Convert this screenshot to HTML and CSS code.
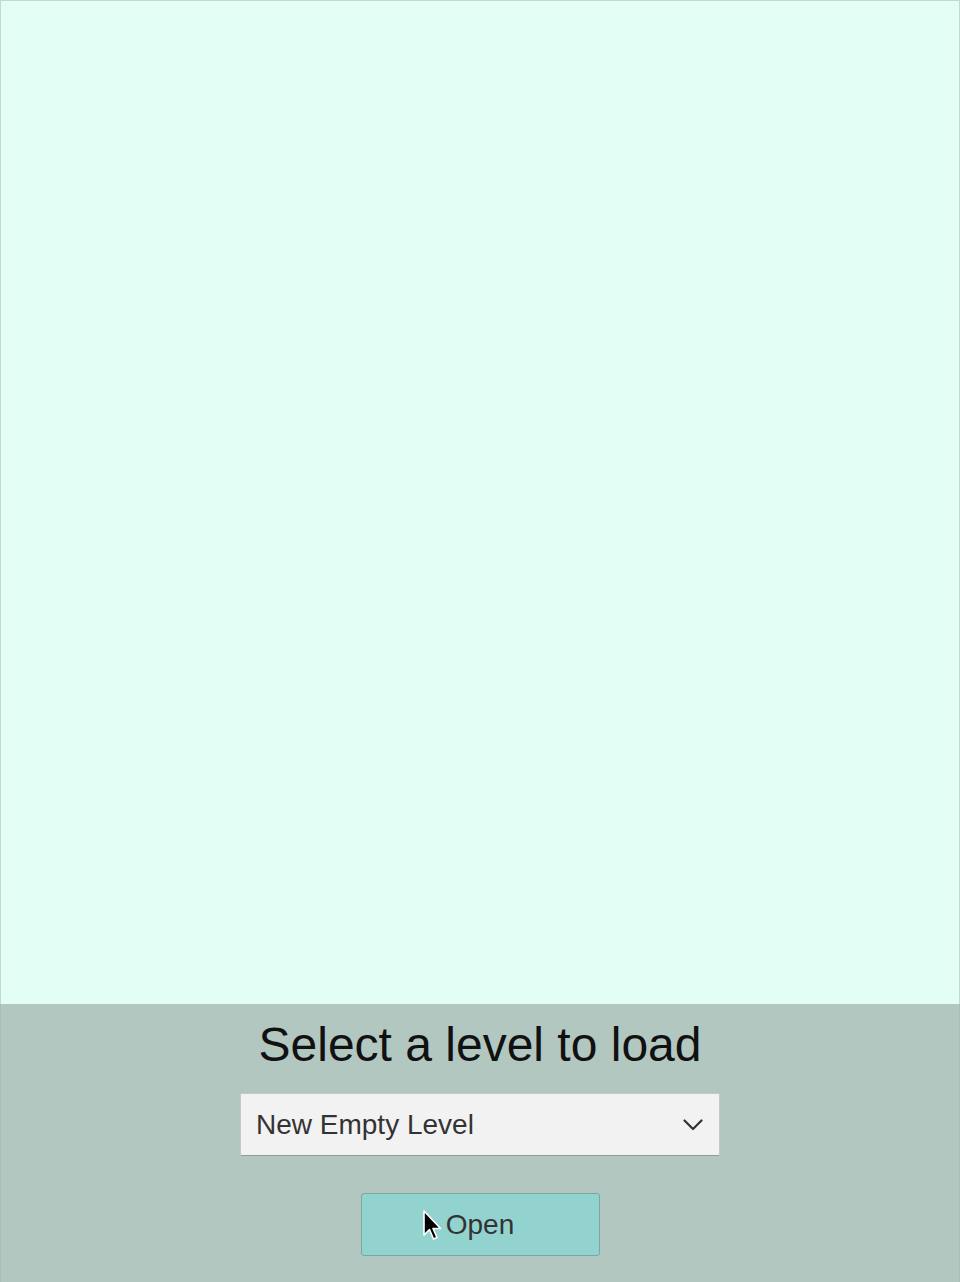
FILE: index.html
```html
<!DOCTYPE html>
<html lang="en">
<head>
<meta charset="utf-8">
<title>Level select</title>
<link rel="stylesheet" href="styles.css">
</head>
<body>
<div class="app">
  <div class="canvas"></div>
  <div class="panel">
    <h1 class="title">Select a level to load</h1>
    <div class="select">
      <span class="select-text">New Empty Level</span>
      <svg class="chevron" width="20" height="12" viewBox="0 0 20 12"><path d="M1.5 1.5 L10 10 L18.5 1.5" fill="none" stroke="#333" stroke-width="2.2" stroke-linecap="round" stroke-linejoin="round"/></svg>
    </div>
    <button class="open-btn">Open
      <svg class="cursor" width="22" height="32" viewBox="0 0 22 32"><path d="M2 1 L2 25 L7.5 19.5 L11.5 29 L15 27.5 L11 18.5 L18.5 18.5 Z" fill="#000" stroke="#fff" stroke-width="1.6" stroke-linejoin="round"/></svg>
    </button>
  </div>
</div>
</body>
</html>
```

FILE: styles.css
```css
html, body {
  margin: 0;
  padding: 0;
}
body {
  width: 960px;
  height: 1282px;
  overflow: hidden;
  font-family: "Liberation Sans", Arial, sans-serif;
}
.app {
  display: flex;
  flex-direction: column;
  height: 1282px;
}
.canvas {
  height: 1004px;
  box-sizing: border-box;
  background: #e3fff5;
  border: 1px solid #c2d9d2;
  border-bottom: none;
}
.panel {
  flex: 1;
  background: #b3c7c1;
  display: flex;
  flex-direction: column;
  align-items: center;
  padding-top: 16px;
  box-sizing: border-box;
  border-left: 1px solid #a9bdb7;
  border-right: 1px solid #a9bdb7;
}
.title {
  margin: 0;
  font-size: 48px;
  font-weight: normal;
  line-height: 50px;
  color: #111;
}
.select {
  margin-top: 23px;
  width: 480px;
  height: 63px;
  box-sizing: border-box;
  background: #f2f2f2;
  border: 1px solid #c4c9c7;
  border-bottom-color: #8f9d99;
  border-radius: 2px;
  display: flex;
  align-items: center;
  justify-content: space-between;
  padding: 0 16px 0 15px;
}
.select-text {
  font-size: 28px;
  color: #333;
}
.chevron {
  display: block;
}
.open-btn {
  position: relative;
  margin-top: 37px;
  width: 239px;
  height: 63px;
  box-sizing: border-box;
  background: #93d3cf;
  border: 1px solid #78a7a4;
  border-radius: 3px;
  font-family: "Liberation Sans", Arial, sans-serif;
  font-size: 28px;
  color: #333;
  padding: 0;
}
.cursor {
  position: absolute;
  left: 60px;
  top: 16px;
}
```
